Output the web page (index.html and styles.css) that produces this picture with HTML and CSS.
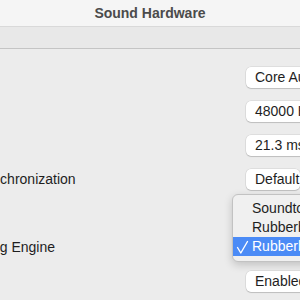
FILE: index.html
```html
<!DOCTYPE html>
<html>
<head>
<meta charset="utf-8">
<link rel="stylesheet" href="styles.css">
</head>
<body>
<div class="window">
  <div class="titlebar"><span class="title">Sound Hardware</span></div>
  <div class="toolbar"></div>
  <div class="form">
    <div class="row"><span class="label"></span><div class="popup">Core Audio</div></div>
    <div class="row"><span class="label"></span><div class="popup">48000 Hz</div></div>
    <div class="row"><span class="label"></span><div class="popup">21.3 ms</div></div>
    <div class="row"><span class="label">Synchronization</span><div class="popup">Default</div></div>
    <div class="row"><span class="label"></span><div class="popup">Default</div></div>
    <div class="row engine"><span class="label label-long">Time Stretching Engine</span>
      <div class="popup">Rubberband R3</div>
      <div class="menu">
        <div class="item">Soundtouch</div>
        <div class="item">Rubberband R2</div>
        <div class="item selected"><svg class="check" width="14" height="16" viewBox="0 0 14 16"><path d="M2.5 8.5 L5.8 14 L12.5 2.5" fill="none" stroke="#fff" stroke-width="1.4" stroke-linecap="round" stroke-linejoin="round"/></svg>Rubberband R3</div>
      </div>
    </div>
    <div class="row"><span class="label"></span><div class="popup">Enabled</div></div>
  </div>
</div>
</body>
</html>
```
FILE: styles.css
```css
html, body {
  margin: 0;
  padding: 0;
  width: 300px;
  height: 300px;
  overflow: hidden;
  background: #ececec;
  font-family: "Liberation Sans", Arial, sans-serif;
  font-size: 14px;
  color: #1e1e1e;
}
.window {
  width: 300px;
  overflow: hidden;
}
.titlebar {
  height: 26px;
  background: #f5f5f5;
  border-bottom: 1px solid #d9d9d9;
  display: flex;
  align-items: center;
  justify-content: center;
}
.title {
  font-weight: bold;
  color: #4b4b4b;
  font-size: 14px;
}
.toolbar {
  height: 21px;
  background: #e8e8e8;
  border-bottom: 1px solid #c4c4c4;
}
.form {
  display: flex;
  flex-direction: column;
  padding-top: 11px;
  margin-left: -24px;
}
.row {
  height: 34px;
  display: grid;
  grid-template-columns: 270px 1fr;
  align-items: center;
  position: relative;
}
.label {
  white-space: nowrap;
  color: #1e1e1e;
}
.label-long {
  margin-left: -66px;
}
.popup {
  height: 21px;
  line-height: 21px;
  background: #fff;
  border-radius: 5px;
  padding-left: 9px;
  white-space: nowrap;
  box-shadow: 0 0 0 0.5px rgba(0,0,0,0.12), 0 1px 1px rgba(0,0,0,0.14);
  color: #1e1e1e;
}
.menu {
  position: absolute;
  left: 256px;
  top: -36px;
  width: 90px;
  padding: 4px 0 5px;
  background: #f0f0f0;
  border: 1px solid #c2c2c2;
  border-radius: 6px;
  box-shadow: 0 3px 8px rgba(0,0,0,0.18);
  white-space: nowrap;
}
.item {
  height: 19px;
  line-height: 19px;
  padding-left: 19px;
  position: relative;
  color: #1e1e1e;
}
.item.selected {
  background: #4b8bf6;
  color: #fff;
}
.check {
  position: absolute;
  left: 2px;
  top: 2px;
}
```
